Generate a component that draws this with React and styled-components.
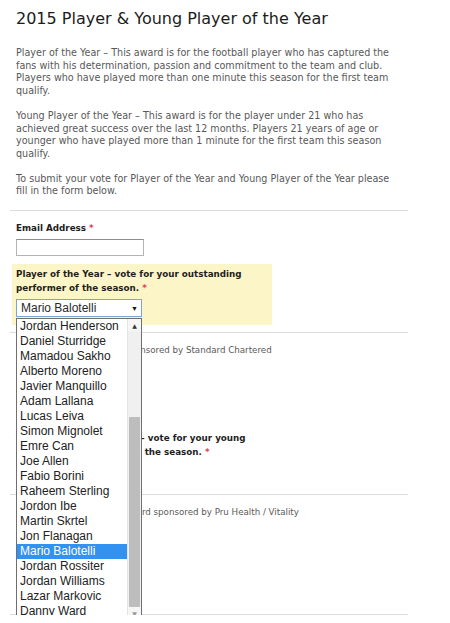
import React from "react";
import styled, { createGlobalStyle } from "styled-components";

const GlobalStyle = createGlobalStyle`
  html, body { margin: 0; padding: 0; background: #ffffff; }
  body { font-family: "DejaVu Sans", Verdana, sans-serif; }
`;

const Page = styled.div`
  width: 398px;
  padding: 8px 0 0 10px;
`;

const Title = styled.h1`
  margin: 0 0 17px 6px;
  font-family: "DejaVu Sans", Verdana, sans-serif;
  font-weight: normal;
  font-size: 16px;
  line-height: 22px;
  color: #1c1c1c;
`;

const Intro = styled.p`
  margin: 0 6px 12px 6px;
  font-size: 9.6px;
  line-height: 12.7px;
  color: #585858;
`;

const Rule = styled.div`
  height: 1px;
  background: #dcdcdc;
  margin: ${(p) => p.$mt || 0}px 0 0 0;
`;

const Label = styled.div`
  font-weight: bold;
  font-size: 8.75px;
  line-height: ${(p) => p.$lh || 13}px;
  color: #1e1e1e;
`;

const Req = styled.span`
  color: #e0405a;
`;

const EmailBlock = styled.div`
  padding: 11px 6px 0 6px;
  display: flex;
  flex-direction: column;
  gap: 4px;
`;

const TextInput = styled.div`
  width: 126px;
  height: 15px;
  border: 1px solid #b4b4b4;
  border-top-color: #8e8e8e;
  background: #fff;
`;

const Field = styled.div`
  margin: ${(p) => p.$mt}px 0 0 2px;
  width: 252px;
  padding: 4px 4px 8px 4px;
  background: ${(p) => (p.$active ? "#fcf5c7" : "transparent")};
  display: flex;
  flex-direction: column;
  gap: 4px;
`;

const SelectWrap = styled.div`
  position: relative;
  width: 126px;
`;

const SelectBox = styled.div`
  box-sizing: border-box;
  width: 126px;
  height: 18px;
  border: 1px solid ${(p) => (p.$focus ? "#7aa6d6" : "#a5a5a5")};
  background: #fff;
  display: flex;
  align-items: center;
  justify-content: space-between;
  padding: 0 3px 0 4px;
  font-family: "Liberation Sans", Arial, sans-serif;
  font-size: 12px;
  color: #2a2a2a;
`;

const Caret = styled.span`
  font-size: 7px;
  color: #111;
  line-height: 1;
`;

const DropList = styled.div`
  position: absolute;
  top: calc(100% + 1px);
  left: 0;
  z-index: 5;
  box-sizing: border-box;
  width: 126px;
  border: 1px solid #6f6f6f;
  background: #fff;
  display: flex;
`;

const Options = styled.ul`
  list-style: none;
  margin: 0;
  padding: 0;
  flex: 1;
`;

const Option = styled.li`
  height: 15px;
  line-height: 15px;
  padding-left: 3px;
  font-family: "Liberation Sans", Arial, sans-serif;
  font-size: 12px;
  white-space: nowrap;
  color: ${(p) => (p.$selected ? "#ffffff" : "#222")};
  background: ${(p) => (p.$selected ? "#3292f2" : "transparent")};
`;

const Scrollbar = styled.div`
  width: 13px;
  background: #f0f0f0;
  border-left: 1px solid #e4e4e4;
  display: flex;
  flex-direction: column;
`;

const ScrollArrow = styled.div`
  height: 12px;
  display: flex;
  align-items: center;
  justify-content: center;
  font-size: 6px;
  color: ${(p) => p.$c || "#333"};
  background: #f6f6f6;
`;

const Track = styled.div`
  flex: 1;
  display: flex;
  flex-direction: column;
  justify-content: flex-end;
`;

const Thumb = styled.div`
  height: 190px;
  margin: 0 1px;
  background: #bdbdbd;
  border-radius: 1px;
`;

const Sponsor = styled.div`
  margin: 11px 6px ${(p) => p.$mb}px 6px;
  font-size: 8.7px;
  line-height: 12px;
  color: #5a5a5a;
  white-space: nowrap;
`;

const players = [
  "Jordan Henderson",
  "Daniel Sturridge",
  "Mamadou Sakho",
  "Alberto Moreno",
  "Javier Manquillo",
  "Adam Lallana",
  "Lucas Leiva",
  "Simon Mignolet",
  "Emre Can",
  "Joe Allen",
  "Fabio Borini",
  "Raheem Sterling",
  "Jordon Ibe",
  "Martin Skrtel",
  "Jon Flanagan",
  "Mario Balotelli",
  "Jordan Rossiter",
  "Jordan Williams",
  "Lazar Markovic",
  "Danny Ward",
];

export default function App() {
  const selected = "Mario Balotelli";
  return (
    <>
      <GlobalStyle />
      <Page>
        <Title>2015 Player &amp; Young Player of the Year</Title>
        <Intro>
          Player of the Year – This award is for the football player who has
          captured the fans with his determination, passion and commitment to
          the team and club. Players who have played more than one minute this
          season for the first team qualify.
        </Intro>
        <Intro>
          Young Player of the Year – This award is for the player under 21 who
          has achieved great success over the last 12 months. Players 21 years
          of age or younger who have played more than 1 minute for the first
          team this season qualify.
        </Intro>
        <Intro>
          To submit your vote for Player of the Year and Young Player of the
          Year please fill in the form below.
        </Intro>
        <Rule $mt={0} />
        <EmailBlock>
          <Label>
            Email Address <Req>*</Req>
          </Label>
          <TextInput />
        </EmailBlock>
        <Field $active $mt={8}>
          <Label $lh={13.5}>
            Player of the Year – vote for your outstanding performer of the
            season. <Req>*</Req>
          </Label>
          <SelectWrap>
            <SelectBox $focus>
              <span>{selected}</span>
              <Caret>▼</Caret>
            </SelectBox>
            <DropList>
              <Options>
                {players.map((name) => (
                  <Option key={name} $selected={name === selected}>
                    {name}
                  </Option>
                ))}
              </Options>
              <Scrollbar>
                <ScrollArrow>▲</ScrollArrow>
                <Track>
                  <Thumb />
                </Track>
                <ScrollArrow $c="#999">▼</ScrollArrow>
              </Scrollbar>
            </DropList>
          </SelectWrap>
        </Field>
        <Rule $mt={7} />
        <Sponsor $mb={72}>
          Player of the Year Award sponsored by Standard Chartered
        </Sponsor>
        <Field $mt={0}>
          <Label $lh={13.5}>
            Young Player of the Year – vote for your young outstanding
            performer of the season. <Req>*</Req>
          </Label>
          <SelectBox>
            <span>Please select</span>
            <Caret>▼</Caret>
          </SelectBox>
        </Field>
        <Rule $mt={5} />
        <Sponsor $mb={96}>
          Young Player of the Year Award sponsored by Pru Health / Vitality
        </Sponsor>
        <Rule $mt={0} />
      </Page>
    </>
  );
}
